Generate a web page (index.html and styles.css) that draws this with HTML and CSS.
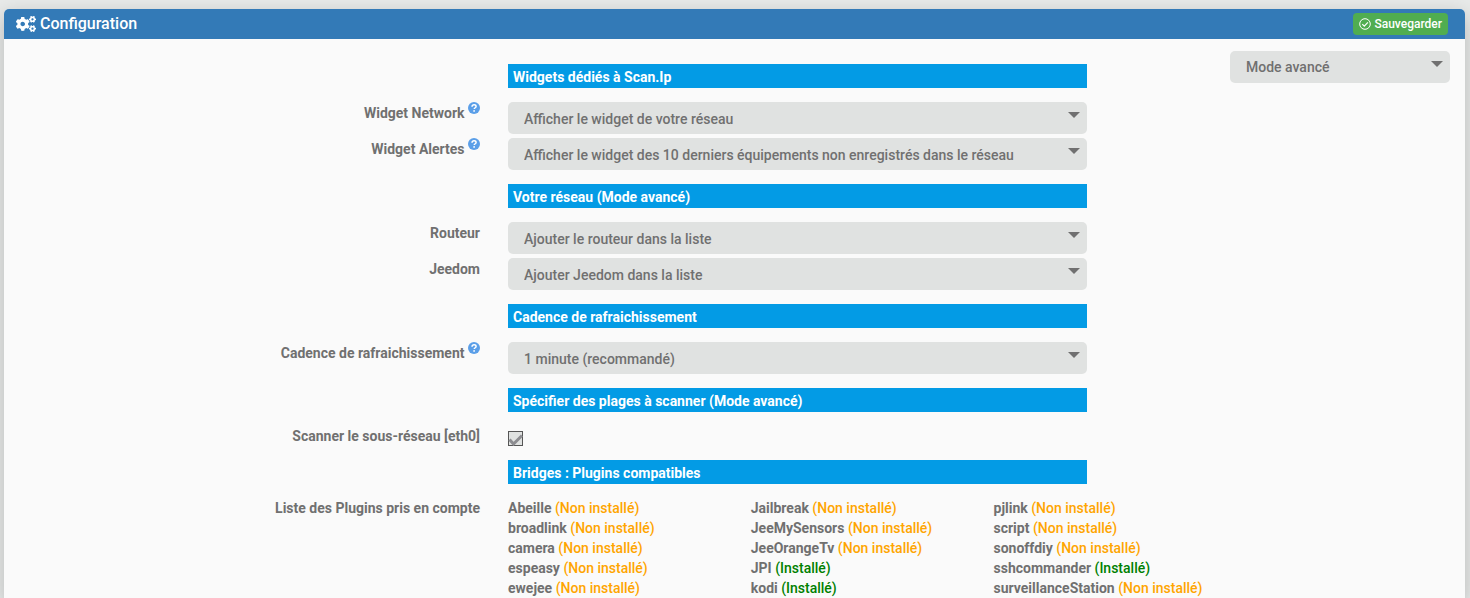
FILE: index.html
```html
<!DOCTYPE html>
<html lang="fr">
<head>
<meta charset="utf-8">
<title>Configuration</title>
<link rel="stylesheet" href="styles.css">
</head>
<body>
<svg class="defs" aria-hidden="true">
  <symbol id="help" viewBox="0 0 12 12">
    <circle cx="6" cy="6" r="6" fill="#5b9fe8"/>
    <path d="M4 4.7C4.1 3.4 5 2.8 6.1 2.8c1.2 0 2 .7 2 1.7 0 1.2-1.9 1.3-1.9 2.600" fill="none" stroke="#fff" stroke-width="1.5"/>
    <circle cx="6.1" cy="8.9" r=".9" fill="#fff"/>
  </symbol>
</svg>
<main class="panel">
  <header class="panel-heading">
    <h1 class="panel-title">
      <svg class="cogs" viewBox="0 0 640 512" aria-hidden="true"><path fill="#fff" d="M512.1 191l-8.200 14.300c-3 5.300-9.400 7.500-15.100 5.400-11.800-4.400-22.600-10.700-32.100-18.600-4.600-3.800-5.800-10.500-2.800-15.700l8.200-14.300c-6.900-8-12.300-17.300-15.900-27.400h-16.500c-6 0-11.200-4.300-12.200-10.300-2-12-2.100-24.600 0-37.100 1-6 6.200-10.400 12.200-10.400h16.500c3.600-10.100 9-19.400 15.900-27.400l-8.200-14.300c-3-5.200-1.900-11.900 2.800-15.700 9.500-7.900 20.400-14.200 32.100-18.600 5.700-2.100 12.100.1 15.100 5.400l8.200 14.300c10.500-1.900 21.200-1.900 31.700 0L552 6.300c3-5.300 9.400-7.500 15.100-5.400 11.800 4.400 22.600 10.700 32.100 18.600 4.600 3.800 5.800 10.500 2.800 15.700l-8.200 14.300c6.900 8 12.300 17.300 15.900 27.400h16.500c6 0 11.200 4.300 12.200 10.300 2 12 2.100 24.600 0 37.100-1 6-6.200 10.400-12.200 10.400h-16.500c-3.600 10.100-9 19.400-15.900 27.400l8.200 14.300c3 5.200 1.900 11.900-2.800 15.700-9.500 7.900-20.400 14.200-32.100 18.600-5.700 2.100-12.100-.1-15.100-5.400l-8.200-14.300c-10.400 1.900-21.200 1.900-31.700 0zm-10.500-58.800c38.500 29.600 82.400-14.300 52.800-52.800-38.500-29.700-82.400 14.300-52.800 52.800zM386.300 286.100l33.700 16.800c10.100 5.800 14.500 18.100 10.500 29.100-8.900 24.200-26.400 46.400-42.600 65.800-7.400 8.900-20.200 11.100-30.300 5.300l-29.100-16.800c-16 13.700-34.600 24.600-54.900 31.700v33.600c0 11.600-8.300 21.600-19.700 23.600-24.600 4.200-50.400 4.400-75.900 0-11.500-2-20-11.900-20-23.600V418c-20.300-7.200-38.900-18-54.900-31.700L74 403c-10 5.800-22.900 3.600-30.300-5.300-16.200-19.400-33.300-41.600-42.200-65.700-4-10.900.4-23.200 10.500-29.100l33.300-16.800c-3.900-20.900-3.900-42.400 0-63.400L12 205.800c-10.100-5.800-14.600-18.100-10.500-29 8.900-24.200 26-46.400 42.200-65.800 7.400-8.900 20.200-11.100 30.300-5.300l29.100 16.800c16-13.700 34.600-24.600 54.900-31.700V57.100c0-11.500 8.200-21.500 19.600-23.500 24.600-4.200 50.500-4.400 76-.1 11.500 2 20 11.900 20 23.600v33.600c20.300 7.200 38.900 18 54.900 31.700l29.100-16.800c10-5.800 22.900-3.600 30.300 5.300 16.200 19.400 33.200 41.600 42.100 65.800 4 10.900.1 23.200-10 29.100l-33.700 16.800c3.900 21 3.900 42.500 0 63.500zm-117.600 21.100c59.200-77-28.700-164.900-105.700-105.700-59.200 77 28.700 164.900 105.700 105.700zm243.400 182.700l-8.200 14.300c-3 5.300-9.400 7.500-15.100 5.400-11.800-4.400-22.600-10.700-32.100-18.600-4.600-3.800-5.800-10.500-2.800-15.700l8.200-14.300c-6.900-8-12.300-17.300-15.900-27.400h-16.500c-6 0-11.200-4.300-12.200-10.300-2-12-2.100-24.600 0-37.100 1-6 6.200-10.400 12.200-10.400h16.500c3.600-10.100 9-19.400 15.900-27.400l-8.200-14.300c-3-5.200-1.900-11.900 2.800-15.700 9.500-7.900 20.400-14.200 32.100-18.600 5.700-2.100 12.100.1 15.100 5.400l8.200 14.300c10.500-1.900 21.200-1.900 31.700 0l8.200-14.300c3-5.300 9.400-7.500 15.100-5.400 11.800 4.400 22.600 10.700 32.100 18.600 4.600 3.800 5.800 10.500 2.800 15.700l-8.200 14.300c6.900 8 12.300 17.300 15.900 27.400h16.500c6 0 11.200 4.300 12.200 10.300 2 12 2.100 24.600 0 37.100-1 6-6.200 10.400-12.200 10.400h-16.500c-3.600 10.100-9 19.400-15.900 27.400l8.200 14.300c3 5.200 1.900 11.900-2.800 15.700-9.500 7.900-20.400 14.200-32.100 18.600-5.700 2.100-12.100-.1-15.100-5.400l-8.200-14.300c-10.400 1.900-21.200 1.900-31.700 0zM501.600 431c38.500 29.600 82.400-14.300 52.800-52.800-38.500-29.600-82.400 14.300-52.800 52.800z"/></svg>
      Configuration
    </h1>
    <button class="save" type="button">
      <svg class="check" viewBox="0 0 12 12" fill="none" stroke="#fff" aria-hidden="true"><circle cx="6" cy="6" r="5.300" stroke-width="1"/><path d="M3.300 6.200l2 2 3.600-3.800" stroke-width="1.200"/></svg>
      Sauvegarder
    </button>
  </header>
  <form class="form">
    <div class="row first">
      <h2 class="legend">Widgets dédiés à Scan.Ip</h2>
      <div class="select mode"><select aria-label="Mode"><option>Mode avancé</option></select></div>
    </div>
    <div class="row">
      <label class="label" for="network">Widget Network <svg class="help"><use href="#help"/></svg></label>
      <div class="select"><select id="network"><option>Afficher le widget de votre réseau</option></select></div>
    </div>
    <div class="row">
      <label class="label" for="alerts">Widget Alertes <svg class="help"><use href="#help"/></svg></label>
      <div class="select"><select id="alerts"><option>Afficher le widget des 10 derniers équipements non enregistrés dans le réseau</option></select></div>
    </div>
    <div class="row"><h2 class="legend">Votre réseau (Mode avancé)</h2></div>
    <div class="row">
      <label class="label" for="router">Routeur</label>
      <div class="select"><select id="router"><option>Ajouter le routeur dans la liste</option></select></div>
    </div>
    <div class="row">
      <label class="label" for="jeedom">Jeedom</label>
      <div class="select"><select id="jeedom"><option>Ajouter Jeedom dans la liste</option></select></div>
    </div>
    <div class="row"><h2 class="legend">Cadence de rafraichissement</h2></div>
    <div class="row">
      <label class="label" for="rate">Cadence de rafraichissement <svg class="help"><use href="#help"/></svg></label>
      <div class="select"><select id="rate"><option>1 minute (recommandé)</option></select></div>
    </div>
    <div class="row"><h2 class="legend">Spécifier des plages à scanner (Mode avancé)</h2></div>
    <div class="row">
      <label class="label plain" for="eth0">Scanner le sous-réseau [eth0]</label>
      <div class="tick">
        <input id="eth0" type="checkbox" checked>
        <svg viewBox="0 0 15 15" aria-hidden="true"><path d="M1.500 8.500l4 4.500 8.500-8.500" fill="none" stroke="#8c8c90" stroke-width="3"/></svg>
      </div>
    </div>
    <div class="row"><h2 class="legend">Bridges : Plugins compatibles</h2></div>
    <div class="row">
      <div class="label plain">Liste des Plugins pris en compte</div>
      <div class="plugins">
        <ul>
          <li>Abeille <span class="missing">(Non installé)</span></li>
          <li>broadlink <span class="missing">(Non installé)</span></li>
          <li>camera <span class="missing">(Non installé)</span></li>
          <li>espeasy <span class="missing">(Non installé)</span></li>
          <li>ewejee <span class="missing">(Non installé)</span></li>
        </ul>
        <ul>
          <li>Jailbreak <span class="missing">(Non installé)</span></li>
          <li>JeeMySensors <span class="missing">(Non installé)</span></li>
          <li>JeeOrangeTv <span class="missing">(Non installé)</span></li>
          <li>JPI <span class="installed">(Installé)</span></li>
          <li>kodi <span class="installed">(Installé)</span></li>
        </ul>
        <ul>
          <li>pjlink <span class="missing">(Non installé)</span></li>
          <li>script <span class="missing">(Non installé)</span></li>
          <li>sonoffdiy <span class="missing">(Non installé)</span></li>
          <li>sshcommander <span class="installed">(Installé)</span></li>
          <li>surveillanceStation <span class="missing">(Non installé)</span></li>
        </ul>
      </div>
    </div>
  </form>
</main>
</body>
</html>
```

FILE: styles.css
```css
* { box-sizing: border-box; }

body {
  margin: 0;
  padding: 9px 5px 0 4px;
  background: #e8eae9;
  color: #707070;
  font: 500 14px/20px Roboto, sans-serif;
}

.defs { display: none; }

.panel {
  background: #fafafa;
  border-radius: 5px 5px 0 0;
  box-shadow: 0 6px 20px rgba(0, 0, 0, 0.22);
  overflow: hidden;
}

.panel-heading {
  display: flex;
  align-items: center;
  justify-content: space-between;
  height: 30px;
  padding: 0 17px 0 12px;
  background: #337ab7;
  color: #fff;
}

.panel-title {
  display: flex;
  align-items: center;
  gap: 4px;
  margin: 0;
  font-size: 16px;
  line-height: 22px;
  font-weight: 500;
}

.cogs { width: 20px; height: 16px; }

.save {
  display: flex;
  align-items: center;
  gap: 3px;
  height: 22px;
  padding: 0 6px;
  border: 0;
  border-radius: 4px;
  background: #50ad50;
  color: #fff;
  font: 500 12px/20px Roboto, sans-serif;
}

.check { width: 12px; height: 12px; }

.form { margin: 0 -2px 0 2px; }

.row {
  display: grid;
  grid-template-columns: 4fr 5fr 3fr;
  align-items: start;
  margin-bottom: 4px;
}

.first { padding-top: 12px; }
.first .legend { margin-top: 13px; }

.legend {
  grid-column: 2;
  margin: 10px 15px;
  padding: 3px 5px 1px;
  background: #039be5;
  color: #fff;
  font-size: 14px;
  line-height: 20px;
  font-weight: 700;
}

.label {
  padding: 1px 13px 0 0;
  font-weight: 700;
  text-align: right;
}

.plain { padding-top: 0; }

.help {
  width: 12px;
  height: 12px;
  margin: -8px 0 0;
  vertical-align: 4px;
}

.select {
  position: relative;
  margin: 0 15px;
}

.mode {
  justify-self: end;
  width: 220px;
  margin: 0 17px 0 0;
}

.select select {
  appearance: none;
  display: block;
  width: 100%;
  height: 32px;
  padding: 2px 28px 0 16px;
  border: 0;
  border-radius: 5px;
  background: #e0e2e1;
  color: #707070;
  font: 500 14px/20px Roboto, sans-serif;
}

.mode select { padding-top: 0; }

.select::after {
  content: "";
  position: absolute;
  top: 10px;
  right: 7px;
  border: 6px solid transparent;
  border-top-color: #707070;
  border-bottom: 0;
  pointer-events: none;
}

.tick {
  position: relative;
  height: 20px;
  margin: 0 15px;
  padding-top: 5px;
}

.tick input {
  appearance: none;
  display: block;
  width: 15px;
  height: 15px;
  margin: 0;
  border: 1px solid #555;
  background: #e0e2e1;
}

.tick svg {
  position: absolute;
  top: 5px;
  left: 0;
  width: 15px;
  height: 15px;
  pointer-events: none;
}

.plugins {
  grid-column: 2 / 4;
  display: grid;
  grid-template-columns: repeat(4, 1fr);
  margin: 0 -12px 0 15px;
}

.plugins ul {
  margin: 0;
  padding: 0;
  list-style: none;
  font-weight: 700;
  white-space: nowrap;
}

.plugins span { font-weight: 500; }
.missing { color: #ffa500; }
.installed { color: #008000; }

.row:last-child { margin-bottom: 0; }
```
